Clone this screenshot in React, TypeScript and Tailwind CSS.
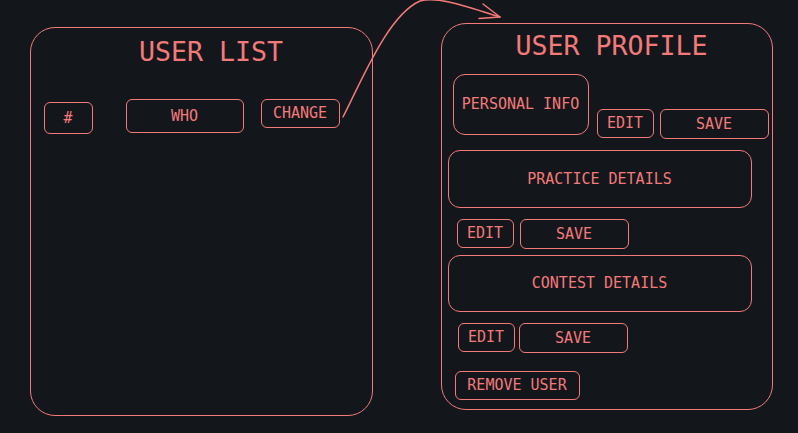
const stroke = 'border-[#f47a7a]';

function Btn({ label, className }: { label: string; className: string }) {
  return (
    <div
      className={`flex items-center justify-center border-[1.5px] ${stroke} rounded-[6px] leading-none text-[15px] shrink-0 ${className}`}
    >
      {label}
    </div>
  );
}

function Card({ label, className }: { label: string; className: string }) {
  return (
    <div
      className={`flex items-center justify-center border-[1.5px] ${stroke} rounded-[12px] leading-none text-[15px] shrink-0 ${className}`}
    >
      {label}
    </div>
  );
}

// arrow from CHANGE over to the profile panel
function Arrow() {
  return (
    <svg
      className="absolute inset-0 pointer-events-none"
      width="798"
      height="433"
      viewBox="0 0 798 433"
      fill="none"
      stroke="#f47a7a"
      strokeWidth="1.5"
      strokeLinecap="round"
      strokeLinejoin="round"
    >
      <path d="M343 117 C362 80, 388 15, 420 1 C440 -4, 470 8, 500 17" />
      <path d="M483 4 L500 17 L479 18.5" />
    </svg>
  );
}

export default function App() {
  return (
    <div
      className="relative w-[798px] h-[433px] bg-[#13161b] text-[#f47a7a] overflow-hidden flex items-start"
      style={{ fontFamily: '"DejaVu Sans Mono", "Liberation Mono", monospace' }}
    >
      {/* User list */}
      <div className={`ml-[30px] mt-[27px] w-[343px] h-[389px] border-[1.5px] ${stroke} rounded-[25px] flex flex-col shrink-0`}>
        <div className="mt-[10.5px] pl-[19px] text-center text-[26.6px] leading-none">USER LIST</div>
        <div className="flex items-start ml-[12.5px] mt-[34.4px]">
          <Btn label="#" className="mt-[3px] w-[49px] h-[32px]" />
          <Btn label="WHO" className="ml-[33px] w-[118px] h-[34px]" />
          <Btn label="CHANGE" className="ml-[17px] w-[79px] h-[29px]" />
        </div>
      </div>

      {/* User profile */}
      <div className={`ml-[68px] mt-[23px] w-[332px] h-[387px] border-[1.5px] ${stroke} rounded-[25px] flex flex-col shrink-0`}>
        <div className="mt-[8.5px] pl-[9px] text-center text-[26.6px] leading-none">USER PROFILE</div>

        <div className="flex items-start ml-[10.5px] mt-[15.4px] h-[65px]">
          <Card label="PERSONAL INFO" className="w-[136px] h-[61px]" />
          <Btn label="EDIT" className="ml-[8px] mt-[35px] w-[57px] h-[29px]" />
          <Btn label="SAVE" className="ml-[6px] mt-[35px] w-[109px] h-[30px]" />
        </div>

        <Card label="PRACTICE DETAILS" className="ml-[5.5px] mt-[11px] w-[304px] h-[58px]" />
        <div className="flex items-start ml-[14.5px] mt-[11px]">
          <Btn label="EDIT" className="w-[57px] h-[29px]" />
          <Btn label="SAVE" className="ml-[6px] w-[109px] h-[30px]" />
        </div>

        <Card label="CONTEST DETAILS" className="ml-[5.5px] mt-[6px] w-[304px] h-[57px]" />
        <div className="flex items-start ml-[15.5px] mt-[11px]">
          <Btn label="EDIT" className="w-[57px] h-[29px]" />
          <Btn label="SAVE" className="ml-[4px] w-[109px] h-[30px]" />
        </div>

        <Btn label="REMOVE USER" className="ml-[12.5px] mt-[18px] w-[125px] h-[29px]" />
      </div>

      <Arrow />
    </div>
  );
}
